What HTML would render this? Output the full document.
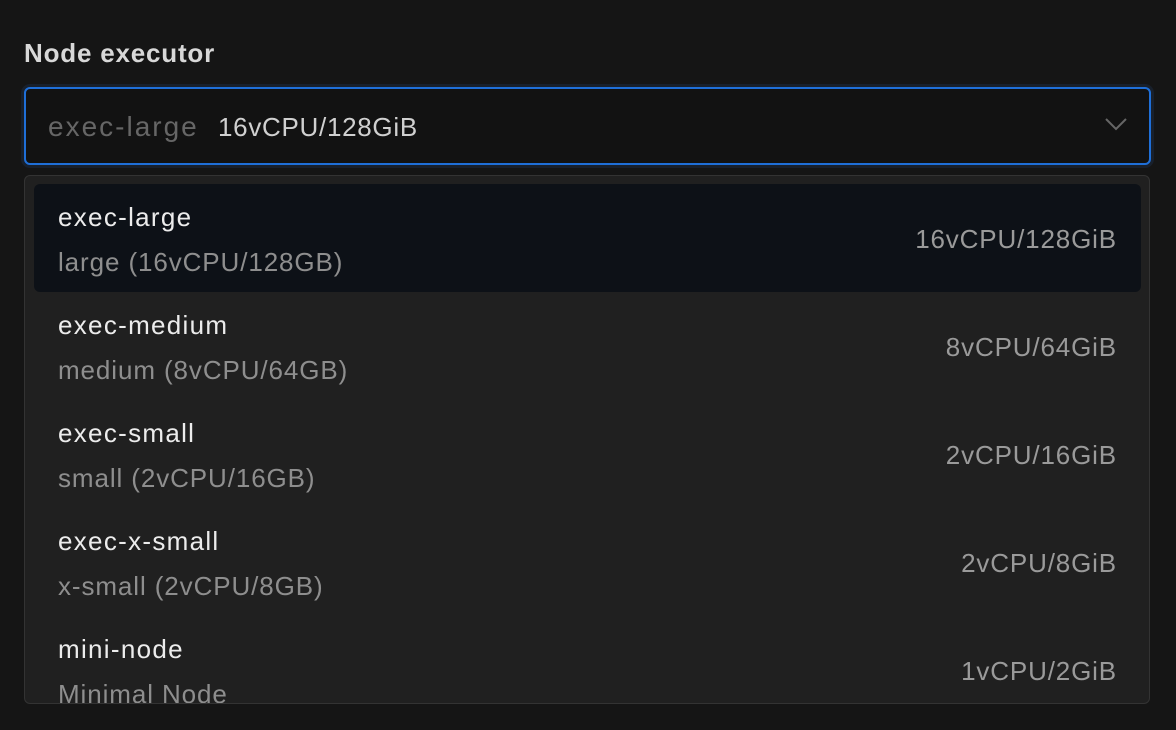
<!DOCTYPE html>
<html><head><style>
body{margin:0;width:1176px;height:730px;background:#151515;font-family:"Liberation Sans",sans-serif;overflow:hidden;position:relative}
.lbl{position:absolute;left:24px;top:38px;font-size:26px;letter-spacing:0.8px;font-weight:bold;color:#d8d8d8}
.inp{position:absolute;left:24px;top:87px;width:1123px;height:74px;border:2px solid #1f6fd8;border-radius:6px;background:#121212;box-shadow:0 0 0 3px #18202c}
.inp .a{position:absolute;left:22px;top:22px;font-size:28px;letter-spacing:2px;color:#666}
.inp .b{position:absolute;left:192px;top:23px;font-size:26px;letter-spacing:0.7px;color:#d0d0d0}
.chev{position:absolute;right:22px;top:28px}
.dd{position:absolute;left:24px;top:175px;width:1124px;height:527px;border:1px solid #333;border-radius:6px;background:#202020;overflow:hidden}
.it{position:absolute;left:9px;width:1107px;height:108px;border-radius:6px}
.it.sel{background:#0d1117}
.t{position:absolute;left:24px;top:18px;font-size:26px;letter-spacing:1.3px;color:#ececec}
.s{position:absolute;left:24px;top:63px;font-size:26px;letter-spacing:0.9px;color:#8e8e8e}
.r{position:absolute;right:24px;top:40px;font-size:26px;letter-spacing:0.85px;color:#9a9a9a}
</style></head><body>
<div class="lbl">Node executor</div>
<div class="inp"><span class="a">exec-large</span><span class="b">16vCPU/128GiB</span>
<svg class="chev" width="22" height="14" viewBox="0 0 22 14"><path d="M1 2 L11 12 L21 2" fill="none" stroke="#666" stroke-width="2"/></svg></div>
<div class="dd">
<div class="it sel" style="top:8px"><div class="t">exec-large</div><div class="s">large (16vCPU/128GB)</div><div class="r">16vCPU/128GiB</div></div>
<div class="it" style="top:116px"><div class="t">exec-medium</div><div class="s">medium (8vCPU/64GB)</div><div class="r">8vCPU/64GiB</div></div>
<div class="it" style="top:224px"><div class="t">exec-small</div><div class="s">small (2vCPU/16GB)</div><div class="r">2vCPU/16GiB</div></div>
<div class="it" style="top:332px"><div class="t">exec-x-small</div><div class="s">x-small (2vCPU/8GB)</div><div class="r">2vCPU/8GiB</div></div>
<div class="it" style="top:440px"><div class="t">mini-node</div><div class="s">Minimal Node</div><div class="r">1vCPU/2GiB</div></div>
</div>
</body></html>
